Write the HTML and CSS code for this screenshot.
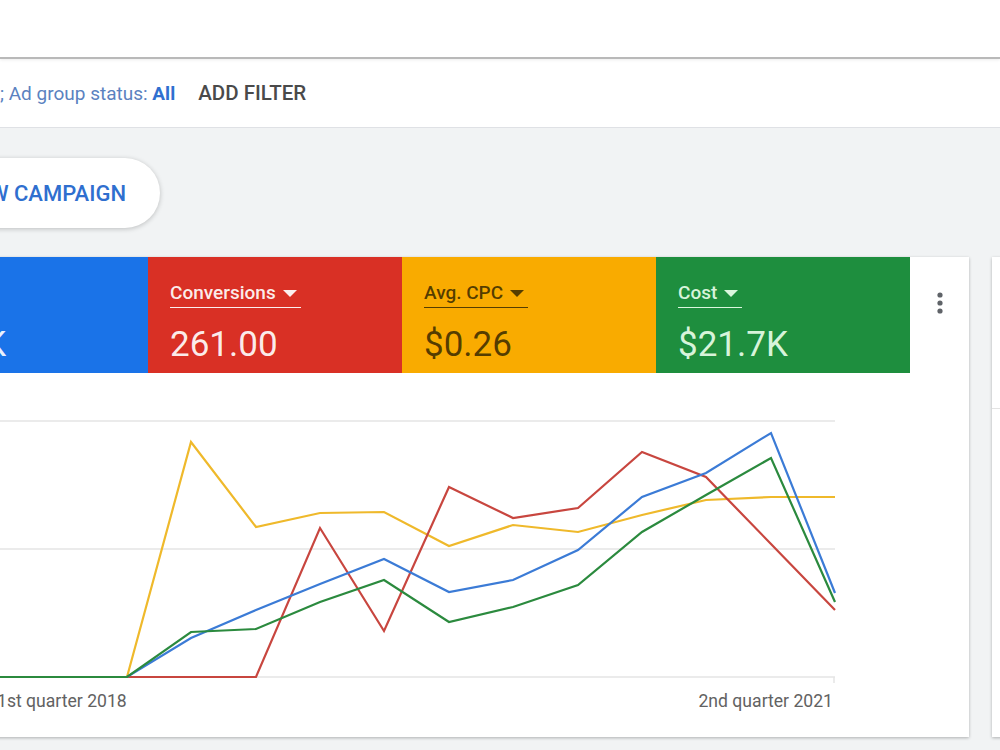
FILE: index.html
```html
<!DOCTYPE html>
<html lang="en">
<head>
<meta charset="utf-8">
<title>Campaigns - Overview</title>
<link rel="stylesheet" href="styles.css">
</head>
<body>

<!-- top app bar -->
<div class="topbar"></div>

<!-- filter strip -->
<div class="filterbar">
  <span class="filter-text">; Ad group status: <b>All</b></span>
  <span class="add-filter">ADD FILTER</span>
</div>

<div class="main">

  <div class="actions">
    <button class="pill" type="button">NEW CAMPAIGN</button>
  </div>

  <div class="cards">

    <div class="card">
      <div class="tiles">
        <div class="tile blue">
          <span class="label">Clicks <i class="caret"></i></span>
          <div class="value">84.1K</div>
        </div>
        <div class="tile red">
          <span class="label">Conversions <i class="caret"></i></span>
          <div class="value">261.00</div>
        </div>
        <div class="tile yellow">
          <span class="label">Avg. CPC <i class="caret"></i></span>
          <div class="value">$0.26</div>
        </div>
        <div class="tile green">
          <span class="label">Cost <i class="caret"></i></span>
          <div class="value">$21.7K</div>
        </div>
        <div class="tile-menu">
          <svg width="6" height="24" viewBox="0 0 6 24">
            <circle cx="3" cy="4" r="2.6" />
            <circle cx="3" cy="12" r="2.6" />
            <circle cx="3" cy="20" r="2.6" />
          </svg>
        </div>
      </div>

      <svg class="chart" width="1075" height="364" viewBox="-106 373 1075 364">
        <!-- grid -->
        <g class="grid">
          <line x1="-106" y1="421" x2="835" y2="421" />
          <line x1="-106" y1="549" x2="835" y2="549" />
          <line x1="-106" y1="677" x2="835" y2="677" />
          <line x1="834" y1="677" x2="834" y2="683" />
        </g>
        <!-- one line per metric, quarters Q1 2018 .. Q2 2021 -->
        <polyline class="s-yellow" points="-2,677 62,677 127,677 191,442 256,527 320,513 384,512 449,546 513,525 578,532 642,515 706,500 771,497 835,497" />
        <polyline class="s-red" points="-2,677 62,677 127,677 191,677 256,677 320,528 384,631 449,487 513,518 578,508 642,452 706,477 771,544 835,610" />
        <polyline class="s-blue" points="-2,677 62,677 127,677 191,638 256,610 320,584 384,559 449,592 513,580 578,550 642,497 706,473 771,433 835,593" />
        <polyline class="s-green" points="-2,677 62,677 127,677 191,632 256,629 320,602 384,580 449,622 513,607 578,585 642,532 706,495 771,458 835,602" />
        <text class="axis" x="-3" y="707">1st quarter 2018</text>
        <text class="axis" x="833" y="707" text-anchor="end">2nd quarter 2021</text>
      </svg>
    </div>

    <div class="card side">
      <div class="side-head"></div>
    </div>

  </div>
</div>

</body>
</html>
```

FILE: styles.css
```css
body {
  margin: 0;
  width: 1000px;
  height: 750px;
  overflow: hidden;
  background: #f1f3f4;
  font-family: Roboto, "Liberation Sans", Arial, sans-serif;
  color: #3c4043;
}

.topbar {
  height: 57px;
  background: #fff;
  border-bottom: 2px solid #b9b9b9;
  box-shadow: 0 1px 3px rgba(0, 0, 0, 0.08);
  position: relative;
}

.filterbar {
  height: 68px;
  background: #fff;
  border-bottom: 1px solid #dfe1e5;
  display: flex;
  align-items: center;
  gap: 23px;
  font-size: 19px;
}
.filter-text { color: #5b82c0; }
.filter-text b { color: #2f6fd0; font-weight: 700; }
.add-filter { color: #4a4a4a; font-size: 20.5px; font-weight: 500; }

.actions { padding-top: 30px; }
.pill {
  width: 270px;
  height: 70px;
  margin-left: -110px;
  padding: 0 34px 0 0;
  display: flex;
  align-items: center;
  justify-content: flex-end;
  border: 0;
  border-radius: 35px;
  background: #fff;
  box-shadow: 0 1px 5px rgba(0, 0, 0, 0.22);
  color: #2f6fcf;
  font-family: Roboto, "Liberation Sans", Arial, sans-serif;
  font-size: 22px;
  font-weight: 500;
}

.cards {
  display: flex;
  gap: 23px;
  margin-top: 29px;
  margin-left: -106px;
}

.card {
  background: #fff;
  box-shadow: 0 1px 3px rgba(0, 0, 0, 0.28);
  height: 480px;
}
.card.side { width: 400px; flex: none; }
.side-head { height: 151px; border-bottom: 1px solid #e3e3e3; }
.card:first-child { width: 1075px; flex: none; }

.tiles { display: flex; height: 116px; }
.tile {
  width: 254px;
  box-sizing: border-box;
  padding: 25px 22px 0;
  color: rgba(255, 255, 255, 0.92);
}
.tile.blue { background: #1a73e8; }
.tile.red { background: #d93025; }
.tile.yellow { background: #f9ab00; color: rgba(40, 30, 0, 0.78); }
.tile.green { background: #1e8e3e; color: rgba(235, 255, 235, 0.92); }

.label {
  display: inline-flex;
  align-items: center;
  height: 22px;
  padding-right: 4px;
  padding-bottom: 3px;
  border-bottom: 1px solid currentColor;
  font-size: 19px;
  font-weight: 500;
  line-height: 22px;
}
.caret {
  width: 0;
  height: 0;
  margin-left: 7px;
  border-left: 7px solid transparent;
  border-right: 7px solid transparent;
  border-top: 7px solid currentColor;
}
.value {
  margin-top: 17px;
  font-size: 35px;
  line-height: 40px;
}

.tile-menu {
  width: 59px;
  display: flex;
  justify-content: center;
  padding-top: 34px;
}
.tile-menu svg { fill: #5f6368; }

.chart { display: block; }
.grid line { stroke: #e4e4e4; stroke-width: 1.5; }
.chart polyline { fill: none; stroke-width: 2.2; stroke-linejoin: miter; }
.s-yellow { stroke: #efb92b; }
.s-red { stroke: #c8463f; }
.s-blue { stroke: #3b7bd6; }
.s-green { stroke: #2b8a3e; }
.axis { font-family: Roboto, "Liberation Sans", Arial, sans-serif; font-size: 17.6px; fill: #626262; }
```
